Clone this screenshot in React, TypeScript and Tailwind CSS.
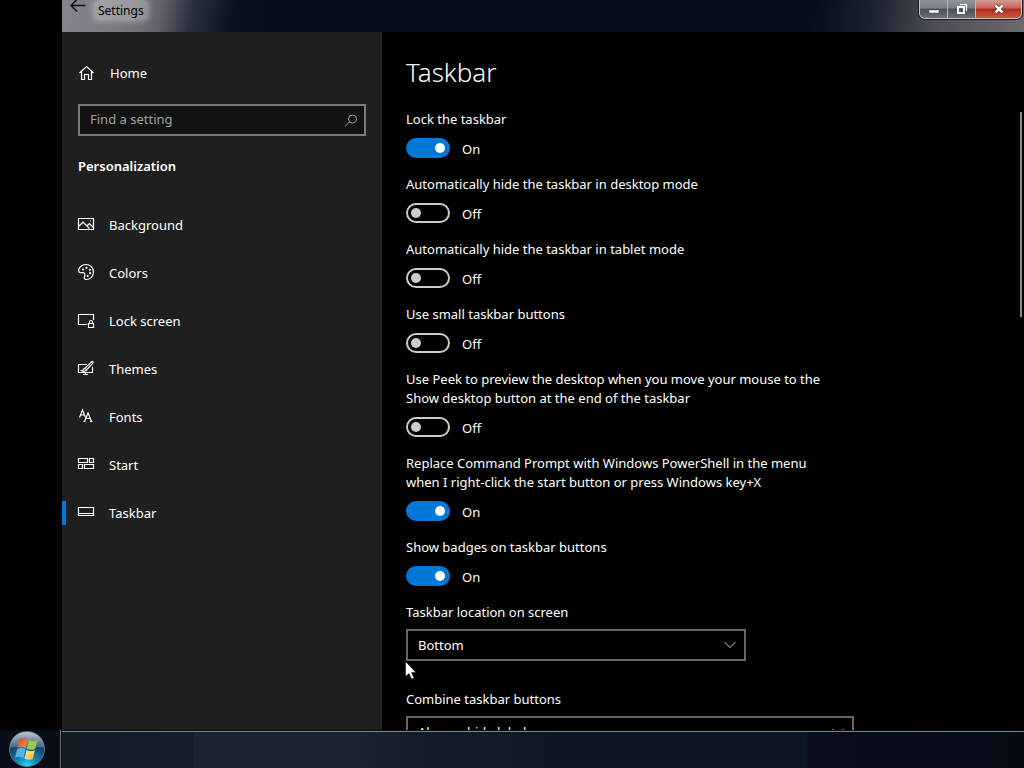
import { useId, useState } from "react";
import type { ReactNode } from "react";

const settings = [
  { label: "Lock the taskbar", on: true },
  { label: "Automatically hide the taskbar in desktop mode", on: false },
  { label: "Automatically hide the taskbar in tablet mode", on: false },
  { label: "Use small taskbar buttons", on: false },
  {
    label:
      "Use Peek to preview the desktop when you move your mouse to the Show desktop button at the end of the taskbar",
    on: false,
  },
  {
    label:
      "Replace Command Prompt with Windows PowerShell in the menu when I right-click the start button or press Windows key+X",
    on: true,
  },
  { label: "Show badges on taskbar buttons", on: true },
];

function Icon({ children }: { children: ReactNode }) {
  return (
    <svg
      viewBox="0 0 16 16"
      className="h-4 w-4 shrink-0 overflow-visible"
      fill="none"
      stroke="currentColor"
      strokeWidth="1.2"
      aria-hidden="true"
    >
      {children}
    </svg>
  );
}

const navItems = [
  {
    name: "Background",
    icon: (
      <>
        <path d="M.5 2.5h15v11H.5z" />
        <path d="M1 10l4-4 6.500 6.500M9 10l2.500-2.500 4 4" />
        <path d="M12 5h1" />
      </>
    ),
  },
  {
    name: "Colors",
    icon: (
      <>
        <path d="M2 8.500C.5 8 .2 6.500 1 4.800 2.300 2 5 .5 8 .5c4.200 0 7.500 3.200 7.500 7.400 0 4.300-3.200 7.600-7.200 7.600-2 0-2.300-1.200-1.800-2.800.6-2 .5-3.300-.6-3.900C4.600 8 3.500 9.200 2 8.500z" />
        <g fill="currentColor" stroke="none">
          <circle cx="5" cy="5.500" r="1.100" />
          <circle cx="8.500" cy="3.800" r="1.100" />
          <circle cx="12" cy="5.800" r="1.100" />
          <circle cx="12.200" cy="9.200" r="1.100" />
          <circle cx="9.700" cy="12" r="1.100" />
        </g>
      </>
    ),
  },
  {
    name: "Lock screen",
    icon: (
      <>
        <path d="M9 12.500H.5v-10h15V8" />
        <path d="M10.500 11.500h5v4h-5z" />
        <path d="M11.500 11.500V10a1.500 1.500 0 013 0v1.500" />
      </>
    ),
  },
  {
    name: "Themes",
    icon: (
      <>
        <path d="M9 4.500H.5v8h14V7" />
        <path d="M7.500 12.500v2M5 14.500h5" />
        <path d="M14.800 1.700c.6.600.2 1.500-.3 2L8.500 9.800 7 8.300l6-6c.5-.6 1.300-1.100 1.800-.6z" />
        <path d="M7 8.300c-1.300.1-1.600.9-1.800 1.700-.3.600-.8.700-1.400.7 1.500 1 4.300.8 4.700-.9" />
      </>
    ),
  },
  {
    name: "Fonts",
    icon: (
      <>
        <path d="M1.500 9.500L4.500 2l3 7.500M2.500 7h4" />
        <path d="M6.500 13.500L10 5l3.500 8.500M7.700 10.500h4.600M5.500 13.500h2M12 13.500h2.500" />
      </>
    ),
  },
  {
    name: "Start",
    icon: <path d="M.5 2.500h9v4h-9zM11.500 2.500h4v4h-4zM.5 8.500h4v4h-4zM6.500 8.500h9v4h-9z" />,
  },
  {
    name: "Taskbar",
    icon: <path d="M.5 3.500h15v8H.5zM.5 9.500h15" />,
  },
];

function Toggle({ label, initial }: { label: string; initial: boolean }) {
  const id = useId();
  const [on, setOn] = useState(initial);

  return (
    <div className="flex flex-col items-start gap-[9px]">
      <label htmlFor={id}>{label}</label>
      <div className="flex h-5 items-center gap-3">
        <span className="relative flex h-5 w-11">
          <input
            id={id}
            type="checkbox"
            role="switch"
            checked={on}
            onChange={(e) => setOn(e.target.checked)}
            className="peer h-5 w-11 appearance-none rounded-full border-2 border-[#ccc] checked:border-[#0078d7] checked:bg-[#0078d7]"
          />
          <span className="pointer-events-none absolute top-[5px] left-[5px] size-2.5 rounded-full bg-[#ccc] peer-checked:left-[29px] peer-checked:bg-white" />
        </span>
        <span className="pt-0.5">{on ? "On" : "Off"}</span>
      </div>
    </div>
  );
}

function Dropdown({ label, options, width }: { label: string; options: string[]; width: string }) {
  const id = useId();

  return (
    <div className="flex flex-col gap-[7px]">
      <label htmlFor={id}>{label}</label>
      <div className={`relative ${width}`}>
        <select
          id={id}
          className="h-8 w-full appearance-none border-2 border-[#666] bg-black px-2.5 text-white"
        >
          {options.map((o) => (
            <option key={o}>{o}</option>
          ))}
        </select>
        <svg
          viewBox="0 0 12 8"
          className="pointer-events-none absolute top-3 right-2.5 h-2 w-3"
          fill="none"
          stroke="#ccc"
          aria-hidden="true"
        >
          <path d="M.5 1L6 6.500 11.500 1" />
        </svg>
      </div>
    </div>
  );
}

function TitleBar() {
  return (
    <header className="flex h-8 shrink-0 items-start justify-between bg-[linear-gradient(100deg,#85858f_0,#77777f_70px,#606169_100px,#2b303c_130px,#0a121e_170px,#060e1a_200px,#060e1a_calc(100%-210px),#1c222e_calc(100%-150px),#4b4d54_calc(100%-90px),#6b6b6f_100%)]">
      <div className="flex items-start">
        <button type="button" aria-label="Back" className="pl-2 text-[#101018]">
          <svg viewBox="0 0 16 14" className="h-3.5 w-4" fill="none" stroke="currentColor" strokeWidth="1.500">
            <path d="M15.500 5.500H1M7 -.5L1 5.500l6 6" />
          </svg>
        </button>
        <h1 className="ml-2 rounded-md bg-white/25 px-1 pt-0.5 text-xs leading-[18px] text-black shadow-[0_0_5px_2px_rgba(255,255,255,0.25)]">
          Settings
        </h1>
      </div>
      <div className="mr-0.5 flex h-[19px] w-[103px] overflow-hidden rounded-b-md border border-t-0 border-[#c4c6ca] shadow-[0_0_0_1px_#1b1d22]">
        <button
          type="button"
          aria-label="Minimize"
          className="flex w-7 items-center justify-center border-r border-[#b4b6ba] bg-[linear-gradient(#8f9298,#7c7f86_45%,#4a4e56_50%,#6a6e76)]"
        >
          <svg viewBox="0 0 12 12" className="h-3 w-3">
            <path d="M1 7h10v3H1z" fill="#fff" stroke="#444" strokeWidth=".5" />
          </svg>
        </button>
        <button
          type="button"
          aria-label="Restore"
          className="flex w-7 items-center justify-center border-r border-[#b4b6ba] bg-[linear-gradient(#8f9298,#7c7f86_45%,#4a4e56_50%,#6a6e76)]"
        >
          <svg viewBox="0 0 12 12" className="h-3 w-3" fill="none" stroke="#fff">
            <path d="M4 1.500h6.500V8" strokeWidth="1.200" />
            <path d="M2 4h6v6H2z" strokeWidth="2" />
          </svg>
        </button>
        <button
          type="button"
          aria-label="Close"
          className="flex flex-1 items-center justify-center bg-[linear-gradient(#d39a92,#c4675a_45%,#ad2a16_50%,#cf5a40)]"
        >
          <svg viewBox="0 0 12 12" className="h-3 w-3" fill="none">
            <path d="M2.500 2.500l7 7M9.500 2.500l-7 7" stroke="#5b2018" strokeWidth="4" />
            <path d="M2.500 2.500l7 7M9.500 2.500l-7 7" stroke="#fff" strokeWidth="2.500" />
          </svg>
        </button>
      </div>
    </header>
  );
}

function Sidebar() {
  return (
    <aside className="flex w-80 shrink-0 flex-col bg-[#1f1f1f]">
      <a href="#home" className="mt-[31px] flex h-5 items-center gap-4 pl-4">
        <Icon>
          <path d="M1.500 8L8.500 1.500l7 6.500M3.500 6.500v8h3v-5h4v5h3v-8" />
        </Icon>
        Home
      </a>
      <div className="relative mx-4 mt-[21px]">
        <input
          type="search"
          aria-label="Find a setting"
          placeholder="Find a setting"
          className="h-8 w-full border-2 border-[#7a7a7a] bg-[#121212] px-2.5 pb-0.5 placeholder:text-[#a0a0a0]"
        />
        <svg
          viewBox="0 0 14 14"
          className="pointer-events-none absolute top-2.5 right-2 h-3.5 w-3.5"
          fill="none"
          stroke="#a0a0a0"
          aria-hidden="true"
        >
          <circle cx="8.500" cy="5" r="4" />
          <path d="M5.700 7.800L1 12.500" />
        </svg>
      </div>
      <h2 className="mt-5 ml-4 leading-5 font-semibold">Personalization</h2>
      <nav className="mt-[25px] flex flex-col">
        {navItems.map(({ name, icon }) => (
          <a
            key={name}
            href={`#${name}`}
            aria-current={name === "Taskbar" ? "page" : undefined}
            className="group flex h-12 items-center"
          >
            <span className="h-6 w-1 group-aria-[current=page]:bg-[#0078d7]" />
            <span className="ml-3 pb-0.5">
              <Icon>{icon}</Icon>
            </span>
            <span className="ml-[15px]">{name}</span>
          </a>
        ))}
      </nav>
    </aside>
  );
}

function StartOrb() {
  return (
    <svg viewBox="0 0 38 38" className="h-[38px] w-[38px]" aria-hidden="true">
      <defs>
        <radialGradient id="orb" cx="50%" cy="100%" r="85%">
          <stop offset="0" stopColor="#2fe0fb" />
          <stop offset=".35" stopColor="#1187b8" />
          <stop offset=".75" stopColor="#16466b" />
          <stop offset="1" stopColor="#2c4a63" />
        </radialGradient>
        <linearGradient id="gloss" x1="0" y1="0" x2="0" y2="1">
          <stop offset="0" stopColor="#d5dfe6" stopOpacity=".85" />
          <stop offset="1" stopColor="#8ba3b2" stopOpacity=".3" />
        </linearGradient>
        <linearGradient id="red" x1="0" y1="0" x2="1" y2="1">
          <stop offset="0" stopColor="#d8431c" />
          <stop offset="1" stopColor="#f59a5a" />
        </linearGradient>
        <linearGradient id="yellow" x1="0" y1="0" x2="1" y2="1">
          <stop offset="0" stopColor="#fff0a0" />
          <stop offset="1" stopColor="#f5b222" />
        </linearGradient>
      </defs>
      <circle cx="19" cy="19" r="17.500" fill="url(#orb)" stroke="#5d8198" strokeWidth=".8" />
      <path d="M2 18C2 8 9.500 2 19 2s17 6 17 16c-6-3-11 1-17 1S8 15 2 18z" fill="url(#gloss)" />
      <path d="M11.500 8.800c3-1.500 5.800-1.200 8.300.4l-2.200 8.800c-2.600-1.600-5.300-1.700-8.300-.4z" fill="url(#red)" />
      <path d="M21 10c2.600 1.500 5.300 1.500 8.300.2l-2.200 8.700c-3 1.400-5.700 1.200-8.300-.3z" fill="#9cc94a" />
      <path d="M9.200 19c3-1.400 5.700-1.200 8.300.3l-2.200 8.700c-2.600-1.500-5.300-1.600-8.300-.3z" fill="#55b4e8" />
      <path d="M18.600 20c2.600 1.500 5.300 1.600 8.300.3l-2.200 8.700c-3 1.300-5.700 1.100-8.300-.4z" fill="url(#yellow)" />
    </svg>
  );
}

export default function App() {
  return (
    <div className="flex h-screen flex-col overflow-hidden bg-black font-['Noto_Sans','Segoe_UI',sans-serif] text-[13px] leading-[19px] text-white">
      <div className="flex min-h-0 flex-1 flex-col pl-[62px]">
        <TitleBar />
        <div className="flex min-h-0 flex-1">
          <Sidebar />
          <main className="relative min-w-0 flex-1 overflow-hidden pt-5 pl-6">
            <h2 className="text-[26px] leading-10 font-light">Taskbar</h2>
            <div className="mt-[18px] flex max-w-[448px] flex-col gap-[17px]">
              <div className="flex max-w-[430px] flex-col gap-[17px]">
                {settings.map((s) => (
                  <Toggle key={s.label} label={s.label} initial={s.on} />
                ))}
              </div>
              <div className="flex flex-col gap-[29px]">
                <Dropdown
                  label="Taskbar location on screen"
                  options={["Bottom", "Left", "Top", "Right"]}
                  width="w-[340px]"
                />
                <Dropdown
                  label="Combine taskbar buttons"
                  options={["Always, hide labels", "When taskbar is full", "Never"]}
                  width="w-full"
                />
              </div>
            </div>
            <div className="absolute top-20 right-0.5 h-[205px] w-0.5 bg-[#8a8a8a]" />
            {/* mouse pointer */}
            <svg viewBox="0 0 12 19" className="absolute top-[629px] left-[23px] h-[19px] w-3" aria-hidden="true">
              <path d="M.5.500v15l3.500-3 2.500 5.500 2.500-1-2.500-5.500h4.500z" fill="#fff" stroke="#000" strokeWidth=".5" />
            </svg>
          </main>
        </div>
      </div>
      <footer className="flex h-[38px] shrink-0 bg-[#080d18]">
        <button type="button" aria-label="Start" className="w-[60px] pl-2">
          <StartOrb />
        </button>
        <div className="mr-px w-px bg-[#6a6e76]" />
        <div className="mt-px flex-1 border-t border-[#7c8088] bg-[linear-gradient(to_right,#151b25_0,#161d29_131px,#1c2431_132px,#1b2330_300px,#141c29_360px,#0e1825_500px,#0e1825_745px,#0a0e1a_746px,#060a15_100%)]" />
      </footer>
    </div>
  );
}
